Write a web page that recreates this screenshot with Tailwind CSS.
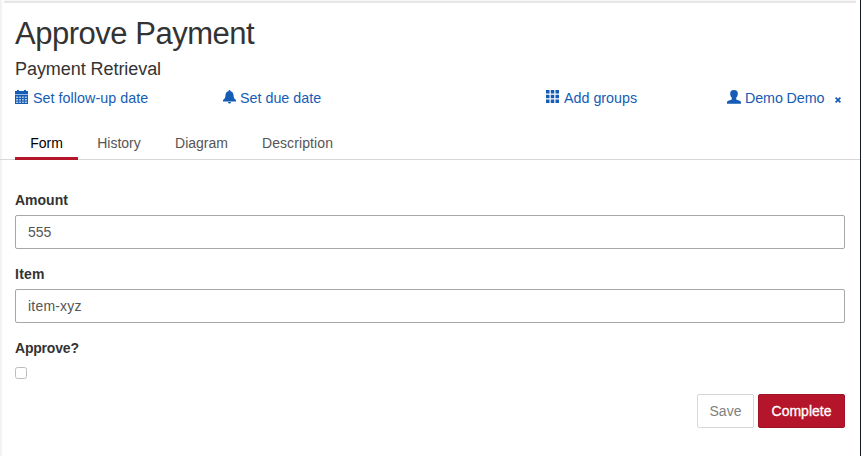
<!DOCTYPE html>
<html lang="en">
<head>
<meta charset="utf-8">
<title>Approve Payment</title>
<script src="https://cdn.jsdelivr.net/npm/@tailwindcss/browser@4"></script>
</head>
<body class="h-[456px] overflow-hidden bg-white font-['Liberation_Sans',Arial,sans-serif] text-[14px] leading-5 text-[#333]">
<div class="flex h-[456px] w-[861px]">
  <div class="w-[3px] shrink-0 bg-gradient-to-r from-[#ededed] to-white"></div>
  <main class="-ml-[3px] flex w-[860px] shrink-0 flex-col">
    <div class="ml-1 mr-1 h-[3px] shrink-0 border-b-2 border-[#e6e6e6] bg-[#f6f6f6]"></div>
    <header class="flex flex-col px-[15px]">
      <h1 class="mt-[14px] h-[34px] whitespace-nowrap text-[31px] leading-[34px] tracking-[-0.48px]">Approve Payment</h1>
      <h2 class="mt-[7px] h-[22px] text-[18px] leading-[22px] tracking-[-0.06px]">Payment Retrieval</h2>
      <div class="mt-2 flex h-5 items-center text-[14.3px] whitespace-nowrap text-[#155cb5]">
        <a class="flex w-[208px] items-center gap-[5px]">
          <svg class="mb-[2px] h-[14px] w-[13px] shrink-0" viewBox="0 0 13 14" fill="currentColor"><path d="M0 1h2V0h2v1h5V0h2v1h2v3.500H0z"/><path fill="#a9c5e6" d="M0 4.500h13V14H0z"/><path d="M0 5h13v1.500H0zM0 8h13v1H0zM0 10.500h13v1H0zM0 13h13v1H0zM0 5h1v9H0zM3.200 5h1v9h-1zM6 5h1v9H6zM8.800 5h1v9h-1zM12 5h1v9h-1z"/></svg>
          <span class="tracking-[0.04px]">Set follow-up date</span>
        </a>
        <a class="flex w-[323px] items-center gap-1">
          <svg class="mb-[2px] h-[14px] w-[13px] shrink-0" viewBox="0 0 13 14" fill="currentColor"><path d="M5.500 1.200Q5.500 0 6.500 0t1 1.200C9.500 1.700 10.300 3 10.500 5c.2 2.500.5 3.500 2.500 5v1.500H0V10c2-1.500 2.300-2.500 2.500-5 .2-2 1-3.300 3-3.800zM5 12h3q0 1.500-1.500 1.500T5 12z"/></svg>
          <span>Set due date</span>
        </a>
        <a class="flex w-[181px] items-center gap-[5px]">
          <svg class="mb-[3px] h-[13px] w-[13px] shrink-0" viewBox="0 0 13 13" fill="currentColor"><path d="M0 0h3.500v3.500H0zM4.750 0h3.500v3.500h-3.500zM9.500 0H13v3.500H9.500zM0 4.750h3.500v3.500H0zM4.750 4.750h3.500v3.500h-3.500zM9.500 4.750H13v3.500H9.500zM0 9.500h3.500V13H0zM4.750 9.500h3.500V13h-3.500zM9.500 9.500H13V13H9.500z"/></svg>
          <span>Add groups</span>
        </a>
        <a class="flex items-center">
          <svg class="mb-[2px] mr-1 h-[14px] w-[14px] shrink-0" viewBox="0 0 14 14" fill="currentColor"><path d="M7 0c2.700 0 4 1.600 3.800 4-.1 1.700-.8 3-1.600 3.800v1.400c0 .6 3.700 1.100 4.400 2 .4.500.4 1.500.4 2.600H0c0-1.100 0-2.100.4-2.600.7-.9 4.400-1.400 4.400-2V7.800C4 7 3.300 5.700 3.200 4 3 1.600 4.300 0 7 0z"/></svg>
          <span class="tracking-[-0.1px]">Demo Demo</span>
          <svg class="ml-[11px] mt-[3px] h-[6px] w-[6px] shrink-0" viewBox="0 0 6 6" fill="none" stroke="currentColor" stroke-width="1.700"><path d="M.6.6l4.800 4.800M5.400.6.600 5.400"/></svg>
        </a>
      </div>
    </header>
    <nav class="mt-[18px] flex h-[34px] shrink-0 gap-1 border-b border-[#d8d8d8] px-[15px] whitespace-nowrap text-[#555]">
      <a class="h-[34px] w-[63px] border-b-[3px] border-[#b5152b] pt-[7px] text-center text-black">Form</a>
      <a class="w-[74px] pt-[7px] text-center">History</a>
      <a class="w-[83px] pt-[7px] text-center">Diagram</a>
      <a class="w-[101px] pt-[7px] text-center tracking-[0.1px]">Description</a>
    </nav>
    <form class="flex flex-col px-[15px] pt-[30px]">
      <label class="mb-[5px] font-bold">Amount</label>
      <input type="text" value="555" class="mb-[15px] h-[34px] w-[830px] rounded-[2px] border border-[#a5a8ab] px-3 text-[#555] outline-none">
      <label class="mb-[5px] font-bold tracking-[0.25px]">Item</label>
      <input type="text" value="item-xyz" class="mb-[15px] h-[34px] w-[830px] rounded-[2px] border border-[#a5a8ab] px-3 tracking-[0.2px] text-[#555] outline-none">
      <label class="mb-[9px] font-bold tracking-[-0.2px]">Approve?</label>
      <input type="checkbox" class="h-3 w-3 appearance-none rounded-[2.500px] border border-[#bdbdbd] bg-white">
      <div class="mt-[15px] flex justify-end gap-1">
        <button type="button" class="h-[34px] w-[57px] rounded-[2px] border border-[#d8d8d8] bg-white text-[#808080]">Save</button>
        <button type="button" class="h-[34px] w-[87px] rounded-[2px] border border-[#a01226] bg-[#b5152b] text-white [-webkit-text-stroke:0.3px_white]">Complete</button>
      </div>
    </form>
  </main>
  <div class="w-px shrink-0 bg-[#171b26]"></div>
</div>
</body>
</html>
